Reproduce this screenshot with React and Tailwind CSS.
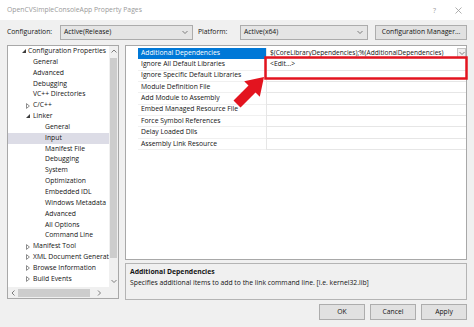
import React from 'react';

const treeItems = [
  { text: 'Configuration Properties', level: 0, icon: 'open' },
  { text: 'General', level: 1 },
  { text: 'Advanced', level: 1 },
  { text: 'Debugging', level: 1 },
  { text: 'VC++ Directories', level: 1 },
  { text: 'C/C++', level: 1, icon: 'closed' },
  { text: 'Linker', level: 1, icon: 'open' },
  { text: 'General', level: 2 },
  { text: 'Input', level: 2, selected: true },
  { text: 'Manifest File', level: 2 },
  { text: 'Debugging', level: 2 },
  { text: 'System', level: 2 },
  { text: 'Optimization', level: 2 },
  { text: 'Embedded IDL', level: 2 },
  { text: 'Windows Metadata', level: 2 },
  { text: 'Advanced', level: 2 },
  { text: 'All Options', level: 2 },
  { text: 'Command Line', level: 2 },
  { text: 'Manifest Tool', level: 1, icon: 'closed' },
  { text: 'XML Document Generator', level: 1, icon: 'closed' },
  { text: 'Browse Information', level: 1, icon: 'closed' },
  { text: 'Build Events', level: 1, icon: 'closed' },
];

const gridRows = [
  { name: 'Additional Dependencies', value: '$(CoreLibraryDependencies);%(AdditionalDependencies)', selected: true },
  { name: 'Ignore All Default Libraries', value: '<Edit...>' },
  { name: 'Ignore Specific Default Libraries', value: '' },
  { name: 'Module Definition File', value: '' },
  { name: 'Add Module to Assembly', value: '' },
  { name: 'Embed Managed Resource File', value: '' },
  { name: 'Force Symbol References', value: '' },
  { name: 'Delay Loaded Dlls', value: '' },
  { name: 'Assembly Link Resource', value: '' },
];

const levelPad = { 0: 'pl-[14px]', 1: 'pl-[18px]', 2: 'pl-[37px]' };
const levelText = { 0: 'ml-[1px]', 1: 'ml-[2px]', 2: '' };

const Chevron = ({ dir }) => {
  const pts = {
    down: '0.5,1 3,3.5 5.5,1',
    up: '0.5,3.5 3,1 5.5,3.5',
    left: '3.5,0.5 1,3 3.5,5.5',
    right: '1,0.5 3.5,3 1,5.5',
  }[dir];
  const w = dir === 'up' || dir === 'down' ? 6 : 5;
  const h = dir === 'up' || dir === 'down' ? 5 : 6;
  return (
    <svg width={w} height={h} viewBox={`0 0 ${w} ${h}`}>
      <polyline points={pts} fill="none" stroke="#707070" strokeWidth="0.9" />
    </svg>
  );
};

const TreeIcon = ({ type }) => {
  if (type === 'open') {
    return (
      <svg width="4" height="4" viewBox="0 0 4 4">
        <polygon points="4,0 4,4 0,4" fill="#3c3c3c" />
      </svg>
    );
  }
  return (
    <svg width="4" height="6" viewBox="0 0 4 6">
      <polygon points="0.5,0.6 3.4,3 0.5,5.4" fill="none" stroke="#707070" strokeWidth="0.8" />
    </svg>
  );
};

const Select = ({ value, className }) => (
  <div className={`h-full flex items-center justify-between bg-[#e5e5e5] border border-[#acacac] pl-[3px] pr-[4px] ${className}`}>
    <span>{value}</span>
    <Chevron dir="down" />
  </div>
);

export default function App() {
  return (
    <div
      className="relative w-[474px] h-[327px] overflow-hidden bg-[#f0f0f0] text-[6.8px] text-[#141414] leading-none"
      style={{ fontFamily: '"Open Sans", "Noto Sans", sans-serif' }}
    >
      {/* Title bar */}
      <div className="h-[20px] bg-white flex items-center pl-[7px] pr-[12px] text-[#9a9a9a] text-[6.8px]">
        <span className="flex-1">OpenCVSimpleConsoleApp Property Pages</span>
        <span className="mr-[19px] text-[7px]">?</span>
        <svg width="7" height="7" viewBox="0 0 7 7">
          <path d="M0.5 0.5 L6.5 6.5 M6.5 0.5 L0.5 6.5" stroke="#9a9a9a" strokeWidth="0.8" />
        </svg>
      </div>

      {/* Configuration row */}
      <div className="mt-[5px] h-[15px] flex items-center pl-[7px]">
        <span className="w-[53px]">Configuration:</span>
        <Select value="Active(Release)" className="w-[133px]" />
        <span className="ml-[5px] w-[42px]">Platform:</span>
        <Select value="Active(x64)" className="w-[128px]" />
        <div className="ml-[7px] w-[92px] h-full flex items-center justify-center bg-[#e1e1e1] border border-[#adadad]">
          Configuration Manager...
        </div>
      </div>

      {/* Main area */}
      <div className="mt-[5px] h-[255px] flex pl-[7px] gap-[6px]">
        {/* Tree */}
        <div className="w-[112px] h-[254px] bg-white border border-[#a8a8a8] flex flex-col">
          <div className="flex-1 flex min-h-0">
            <div className="flex-1 overflow-hidden">
              {treeItems.map((item, i) => (
                <div
                  key={i}
                  className={`h-[10.85px] flex items-center whitespace-nowrap ${levelPad[item.level]} ${item.selected ? 'bg-[#dcdce6]' : ''}`}
                >
                  {item.level < 2 && (
                    <span className="w-[5px] shrink-0 flex items-center">
                      {item.icon && <TreeIcon type={item.icon} />}
                    </span>
                  )}
                  <span className={levelText[item.level]}>{item.text}</span>
                </div>
              ))}
            </div>
            {/* Vertical scrollbar */}
            <div className="w-[9px] shrink-0 bg-[#f0f0f0] flex flex-col">
              <div className="h-[11px] flex items-center justify-center">
                <Chevron dir="up" />
              </div>
              <div className="flex-1 px-[1px] pt-[1px]">
                <div className="h-[200px] bg-[#cdcdcd]" />
              </div>
              <div className="h-[11px] flex items-center justify-center">
                <Chevron dir="down" />
              </div>
            </div>
          </div>
          {/* Horizontal scrollbar */}
          <div className="h-[11px] flex bg-[#f0f0f0]">
            <div className="flex-1 flex items-center">
              <div className="w-[10px] flex justify-center">
                <Chevron dir="left" />
              </div>
              <div className="w-[72px] h-[8px] bg-[#cdcdcd]" />
              <div className="flex-1 flex justify-center">
                <Chevron dir="right" />
              </div>
            </div>
            <div className="w-[9px]" />
          </div>
        </div>

        {/* Right column */}
        <div className="w-[342px] flex flex-col gap-[3px]">
          {/* Property grid */}
          <div className="h-[215px] bg-white border border-[#a8a8a8] pt-[2px]">
            {gridRows.map((row, i) => (
              <div key={i} className="h-[11.35px] flex whitespace-nowrap">
                <div className="w-[12px]" />
                <div
                  className={`w-[128px] flex items-center pl-[3px] overflow-hidden border-b ${
                    row.selected ? 'bg-[#0078d7] text-white border-[#0078d7]' : 'border-[#f0f0f0]'
                  }`}
                >
                  {row.name}
                </div>
                <div className="flex-1 flex items-center justify-between border-l border-b border-[#e6e6e6] pl-[3px]">
                  <span className={row.selected ? 'text-[6.6px]' : ''}>{row.value}</span>
                  {row.selected && (
                    <div className="w-[9px] shrink-0 h-full flex items-center justify-center bg-[#f0f0f0] border border-[#c4c4c4]">
                      <Chevron dir="down" />
                    </div>
                  )}
                </div>
              </div>
            ))}
          </div>

          {/* Description */}
          <div className="h-[37px] bg-[#f0f0f0] border border-[#b4b4b4] px-[4px] pt-[5px] flex flex-col gap-[4px]">
            <span className="font-bold">Additional Dependencies</span>
            <span>Specifies additional items to add to the link command line. [i.e. kernel32.lib]</span>
          </div>
        </div>
      </div>

      {/* Buttons */}
      <div className="mt-[4px] h-[16px] flex justify-end pr-[7px] gap-[5px]">
        {['OK', 'Cancel', 'Apply'].map((label) => (
          <div
            key={label}
            className="w-[46px] h-full flex items-center justify-center bg-[#e1e1e1] border border-[#adadad]"
          >
            {label}
          </div>
        ))}
      </div>

      {/* Annotation overlay */}
      <svg className="absolute left-0 top-0 pointer-events-none" width="474" height="327" viewBox="0 0 474 327">
        <rect x="265.5" y="57.5" width="201" height="21" fill="none" stroke="#e3141f" strokeWidth="2.5" />
        <polygon
          points="264,77 259.8,96.8 255.5,92.5 240.5,107.5 233.5,100.5 248.5,85.5 244.2,81.2"
          fill="#e3141f"
        />
      </svg>
    </div>
  );
}
